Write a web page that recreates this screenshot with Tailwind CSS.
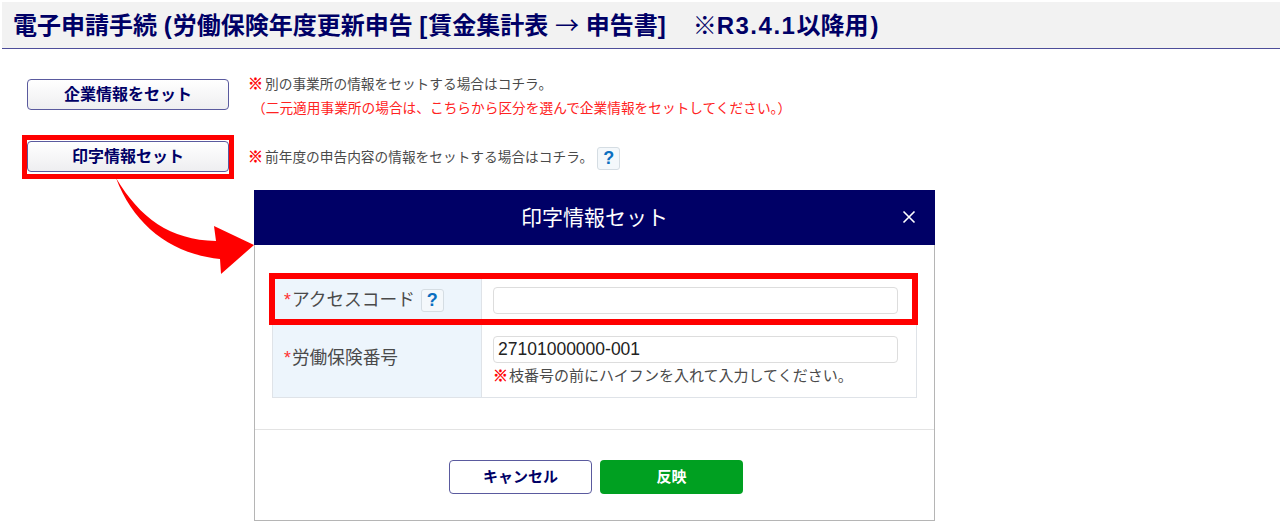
<!doctype html>
<html lang="ja">
  <head>
    <meta charset="UTF-8" />
    <title>電子申請手続</title>
    <script src="https://cdn.jsdelivr.net/npm/@tailwindcss/browser@4"></script>
  </head>
  <body class="relative h-[522px] overflow-hidden bg-white font-['Liberation_Sans','Noto_Sans_CJK_JP',sans-serif] text-[#4a4a4a]">
    <header class="ml-[2px] mt-[2px] flex h-[47px] items-center border-b border-[#4d4d99] bg-[#f2f2f2] pl-[11px]">
      <h1 class="whitespace-pre text-[24px] font-bold text-[#000066]">電子申請手続 <span class="tracking-[1px]">(</span>労働保険年度更新申告 <span class="tracking-[1px]">[</span>賃金集計表 <span class="font-['Noto_Sans_CJK_JP'] font-normal">→</span> 申告書<span class="tracking-[3px]">]</span>　※<span class="tracking-[1.5px]">R3.4.1</span>以降用<span class="ml-[2px]">)</span></h1>
    </header>

    <section class="ml-[27px] mt-[30px] flex h-[31px]">
      <button class="h-[31px] w-[202px] rounded-[4px] border border-[#5a5a9e] bg-gradient-to-b from-white to-[#eeeef0] text-[16px] font-bold text-[#000066]">企業情報をセット</button>
      <div class="ml-[19px] -mt-[7px] text-[13.7px] leading-[24px]">
        <p><span class="mr-[2px] text-[15px] font-bold text-[#ff0000] [-webkit-text-stroke:0.4px_#ff0000]">※</span>別の事業所の情報をセットする場合はコチラ。</p>
        <p class="ml-[4px] text-[#ff2222]">（二元適用事業所の場合は、こちらから区分を選んで企業情報をセットしてください。）</p>
      </div>
    </section>

    <section class="ml-[27px] mt-[31px] flex h-[31px] items-center">
      <button class="h-[31px] w-[202px] rounded-[4px] border border-[#5a5a9e] bg-gradient-to-b from-white to-[#eeeef0] text-[16px] font-bold text-[#000066]">印字情報セット</button>
      <p class="ml-[19px] mt-[2px] text-[13.7px]"><span class="mr-[2px] text-[15px] font-bold text-[#ff0000] [-webkit-text-stroke:0.4px_#ff0000]">※</span>前年度の申告内容の情報をセットする場合はコチラ。</p>
      <span class="ml-[4px] mt-[4px] flex h-[23px] w-[23px] items-center justify-center rounded-[3px] border border-[#d5dde3] bg-[#f4f8fb] text-[18px] font-bold text-[#0b6fc0]">?</span>
    </section>

    <div class="ml-[254px] mt-[18px] flex h-[331px] w-[681px] flex-col border border-t-0 border-[#b5b5b5]">
      <div class="relative -mx-px flex h-[55px] items-center justify-center bg-[#000066] text-[21px] text-white">
        印字情報セット
        <svg class="absolute right-[19px] top-[20px]" width="14" height="14" viewBox="0 0 14 14" fill="none" stroke="white" stroke-width="1.6"><path d="M1.5 1.5l11 11M12.5 1.5l-11 11" /></svg>
      </div>

      <div class="ml-[17px] mr-[17px] mt-[31px] border border-[#dfe3e8] text-[17.7px]">
        <div class="flex h-[48px] border-b border-[#dfe3e8]">
          <div class="flex w-[209px] items-center border-r border-[#dfe3e8] bg-[#edf5fc] pl-[11px]">
            <span class="mr-[1px] text-[#ff3333]">*</span>アクセスコード
            <span class="ml-[6px] flex h-[23px] w-[23px] items-center justify-center rounded-[3px] border border-[#d5dde3] bg-[#f4f8fb] text-[18px] font-bold text-[#0b6fc0]">?</span>
          </div>
          <div class="flex flex-1 items-center pl-[11px]">
            <input type="text" class="h-[27px] w-[405px] rounded-[4px] border border-[#dddddd] bg-white" />
          </div>
        </div>
        <div class="flex h-[72px]">
          <div class="flex w-[209px] items-center border-r border-[#dfe3e8] bg-[#edf5fc] pb-[6px] pl-[11px]">
            <span class="mr-[1px] text-[#ff3333]">*</span>労働保険番号
          </div>
          <div class="flex-1 pl-[11px] pt-[11px]">
            <input type="text" value="27101000000-001" class="h-[27px] w-[405px] rounded-[4px] border border-[#dddddd] bg-white px-[4px] text-[17.5px] text-[#222]" />
            <p class="mt-[3px] whitespace-nowrap text-[15px] leading-[20px]"><span class="mr-[1px] font-bold text-[#ff0000] [-webkit-text-stroke:0.4px_#ff0000]">※</span>枝番号の前にハイフンを入れて入力してください。</p>
          </div>
        </div>
      </div>

      <div class="mt-[31px] flex flex-1 justify-center gap-[8px] border-t border-[#e3e3e3] pl-[3px] pt-[30px]">
        <button class="h-[34px] w-[143px] rounded-[4px] border border-[#5a5a9e] bg-white text-[15px] font-bold text-[#000066]">キャンセル</button>
        <button class="h-[34px] w-[143px] rounded-[4px] bg-[#00a021] text-[15px] font-bold text-white">反映</button>
      </div>
    </div>

    <!-- annotations drawn over the screenshot -->
    <div class="absolute left-[22px] top-[135px] h-[44px] w-[212px] border-[5px] border-[#ff0000]"></div>
    <div class="absolute left-[269px] top-[273px] h-[52px] w-[649px] border-[6px] border-[#ff0000]"></div>
    <svg class="absolute left-0 top-0" width="300" height="290" viewBox="0 0 300 290" fill="#ff0000">
      <path d="M116 178 C140 218 170 240 216 241 L214 226 L254 245 L221 274 L220 259 C172 254 134 226 116 178 Z" />
    </svg>
  </body>
</html>
